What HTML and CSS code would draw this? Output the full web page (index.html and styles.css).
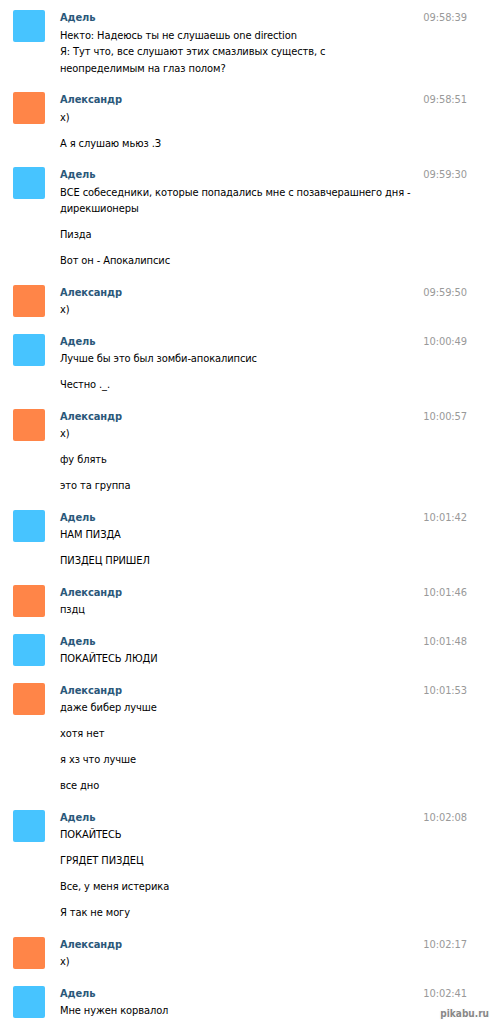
FILE: index.html
```html
<!DOCTYPE html>
<html lang="ru">
<head>
  <meta charset="UTF-8">
  <title>Диалог</title>
  <meta name="viewport" content="width=device-width, initial-scale=1.0">
  <link rel="stylesheet" href="styles.css">
</head>
<body>

  <div class="dialog">

    <div class="msg-group">
      <div class="avatar blue"></div>
      <div class="msg-body">
        <div class="msg-head"><span class="name">Адель</span><span class="time">09:58:39</span></div>
        <div class="msg">Некто: Надеюсь ты не слушаешь one direction<br>Я: Тут что, все слушают этих смазливых существ, с<br>неопределимым на глаз полом?</div>
      </div>
    </div>

    <div class="msg-group">
      <div class="avatar orange"></div>
      <div class="msg-body">
        <div class="msg-head"><span class="name">Александр</span><span class="time">09:58:51</span></div>
        <div class="msg">x)</div>
        <div class="msg">А я слушаю мьюз .З</div>
      </div>
    </div>

    <div class="msg-group">
      <div class="avatar blue"></div>
      <div class="msg-body">
        <div class="msg-head"><span class="name">Адель</span><span class="time">09:59:30</span></div>
        <div class="msg">ВСЕ собеседники, которые попадались мне с позавчерашнего дня - дирекшионеры</div>
        <div class="msg">Пизда</div>
        <div class="msg">Вот он - Апокалипсис</div>
      </div>
    </div>

    <div class="msg-group">
      <div class="avatar orange"></div>
      <div class="msg-body">
        <div class="msg-head"><span class="name">Александр</span><span class="time">09:59:50</span></div>
        <div class="msg">x)</div>
      </div>
    </div>

    <div class="msg-group">
      <div class="avatar blue"></div>
      <div class="msg-body">
        <div class="msg-head"><span class="name">Адель</span><span class="time">10:00:49</span></div>
        <div class="msg">Лучше бы это был зомби-апокалипсис</div>
        <div class="msg">Честно ._.</div>
      </div>
    </div>

    <div class="msg-group">
      <div class="avatar orange"></div>
      <div class="msg-body">
        <div class="msg-head"><span class="name">Александр</span><span class="time">10:00:57</span></div>
        <div class="msg">x)</div>
        <div class="msg">фу блять</div>
        <div class="msg">это та группа</div>
      </div>
    </div>

    <div class="msg-group">
      <div class="avatar blue"></div>
      <div class="msg-body">
        <div class="msg-head"><span class="name">Адель</span><span class="time">10:01:42</span></div>
        <div class="msg">НАМ ПИЗДА</div>
        <div class="msg">ПИЗДЕЦ ПРИШЕЛ</div>
      </div>
    </div>

    <div class="msg-group">
      <div class="avatar orange"></div>
      <div class="msg-body">
        <div class="msg-head"><span class="name">Александр</span><span class="time">10:01:46</span></div>
        <div class="msg">пздц</div>
      </div>
    </div>

    <div class="msg-group">
      <div class="avatar blue"></div>
      <div class="msg-body">
        <div class="msg-head"><span class="name">Адель</span><span class="time">10:01:48</span></div>
        <div class="msg">ПОКАЙТЕСЬ ЛЮДИ</div>
      </div>
    </div>

    <div class="msg-group">
      <div class="avatar orange"></div>
      <div class="msg-body">
        <div class="msg-head"><span class="name">Александр</span><span class="time">10:01:53</span></div>
        <div class="msg">даже бибер лучше</div>
        <div class="msg">хотя нет</div>
        <div class="msg">я хз что лучше</div>
        <div class="msg">все дно</div>
      </div>
    </div>

    <div class="msg-group">
      <div class="avatar blue"></div>
      <div class="msg-body">
        <div class="msg-head"><span class="name">Адель</span><span class="time">10:02:08</span></div>
        <div class="msg">ПОКАЙТЕСЬ</div>
        <div class="msg">ГРЯДЕТ ПИЗДЕЦ</div>
        <div class="msg">Все, у меня истерика</div>
        <div class="msg">Я так не могу</div>
      </div>
    </div>

    <div class="msg-group">
      <div class="avatar orange"></div>
      <div class="msg-body">
        <div class="msg-head"><span class="name">Александр</span><span class="time">10:02:17</span></div>
        <div class="msg">x)</div>
      </div>
    </div>

    <div class="msg-group">
      <div class="avatar blue"></div>
      <div class="msg-body">
        <div class="msg-head"><span class="name">Адель</span><span class="time">10:02:41</span></div>
        <div class="msg">Мне нужен корвалол</div>
      </div>
    </div>

  </div>

  <div class="watermark">pikabu.ru</div>
</body>
</html>
```

FILE: styles.css
```css
* { box-sizing: border-box; }

body {
  margin: 0;
  background-color: #fff;
  color: #000;
  font-family: 'DejaVu Sans Condensed', 'DejaVu Sans', sans-serif;
  font-stretch: condensed;
  font-size: 11px;
  letter-spacing: -0.1px;
  position: relative;
  min-height: 100vh;
}

.dialog {
  padding: 10px 28px 0 13px;
}

.msg-group {
  display: flex;
  align-items: flex-start;
}

.msg-group + .msg-group {
  margin-top: 15px;
}

.avatar {
  width: 32px;
  height: 32px;
  border-radius: 2px;
  flex-shrink: 0;
  margin-right: 15px;
}

.avatar.blue { background-color: #47c4ff; }
.avatar.orange { background-color: #ff8548; }

.msg-body {
  flex-grow: 1;
}

.msg-head {
  display: flex;
  justify-content: space-between;
  line-height: 16px;
  margin-bottom: 1.5px;
}

.name {
  font-weight: bold;
  color: #2b587a;
}

.time {
  color: #999;
}

.msg {
  line-height: 16.5px;
  max-width: 360px;
}

.msg + .msg {
  margin-top: 9.5px;
}

.watermark {
  position: absolute;
  right: 6px;
  bottom: 7px;
  font-family: 'DejaVu Sans Condensed', 'DejaVu Sans', sans-serif;
  font-size: 10px;
  font-weight: bold;
  letter-spacing: 0;
  color: #888;
  text-shadow: 1px 0 0 #fff, -1px 0 0 #fff, 0 1px 0 #fff, 0 -1px 0 #fff, 0 0 1px #555;
}
```
